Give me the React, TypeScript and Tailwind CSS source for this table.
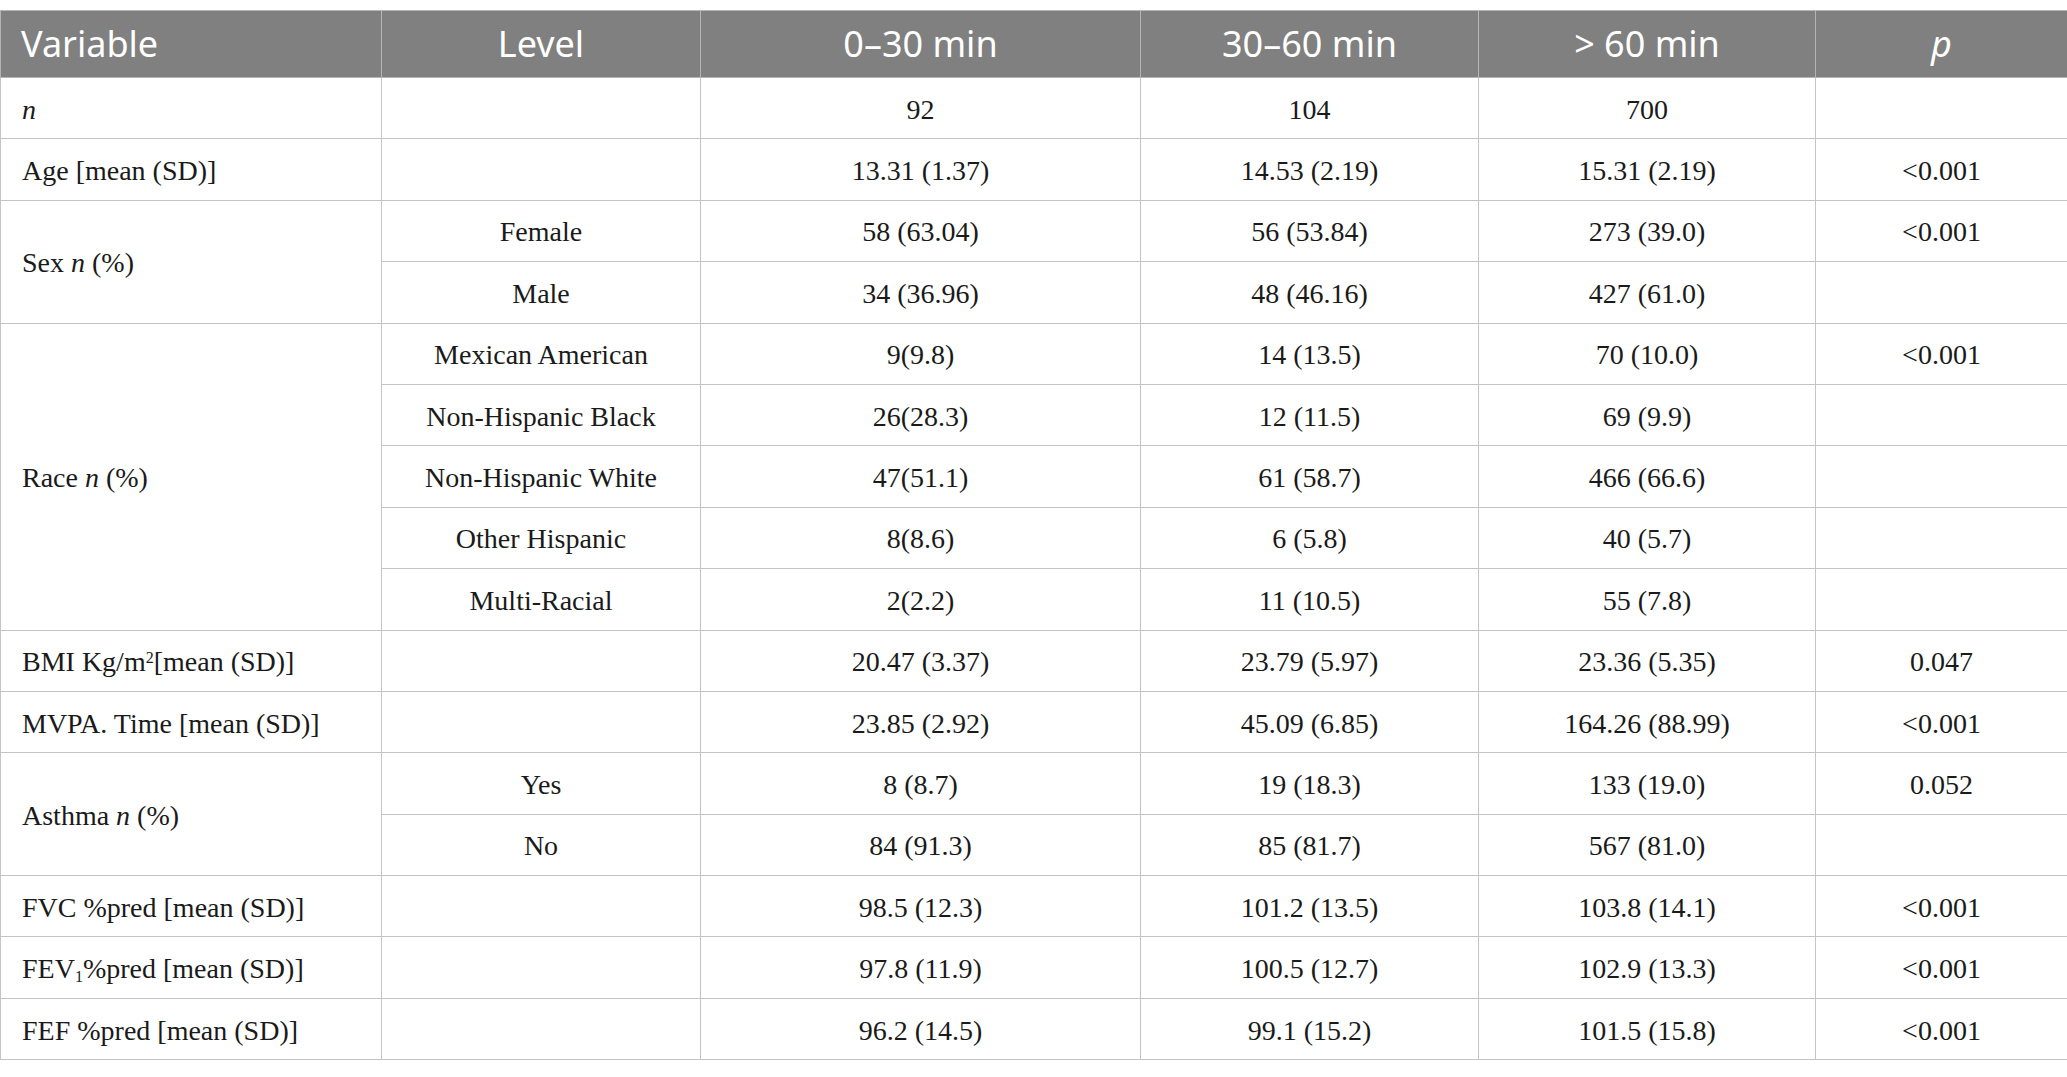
import React from "react";

const serif = { fontFamily: '"Liberation Serif", "Times New Roman", serif' };

type Row = {
  variable?: React.ReactNode;
  span?: number;
  level?: string;
  a: string;
  b: string;
  c: string;
  p: string;
};

const I = ({ children }: { children: React.ReactNode }) => <i>{children}</i>;

const rows: Row[] = [
  { variable: <I>n</I>, a: "92", b: "104", c: "700", p: "" },
  { variable: "Age [mean (SD)]", a: "13.31 (1.37)", b: "14.53 (2.19)", c: "15.31 (2.19)", p: "<0.001" },
  { variable: <>Sex <I>n</I> (%)</>, span: 2, level: "Female", a: "58 (63.04)", b: "56 (53.84)", c: "273 (39.0)", p: "<0.001" },
  { level: "Male", a: "34 (36.96)", b: "48 (46.16)", c: "427 (61.0)", p: "" },
  { variable: <>Race <I>n</I> (%)</>, span: 5, level: "Mexican American", a: "9(9.8)", b: "14 (13.5)", c: "70 (10.0)", p: "<0.001" },
  { level: "Non-Hispanic Black", a: "26(28.3)", b: "12 (11.5)", c: "69 (9.9)", p: "" },
  { level: "Non-Hispanic White", a: "47(51.1)", b: "61 (58.7)", c: "466 (66.6)", p: "" },
  { level: "Other Hispanic", a: "8(8.6)", b: "6 (5.8)", c: "40 (5.7)", p: "" },
  { level: "Multi-Racial", a: "2(2.2)", b: "11 (10.5)", c: "55 (7.8)", p: "" },
  {
    variable: (
      <>
        BMI Kg/m<sup className="text-[16px]">2</sup>[mean (SD)]
      </>
    ),
    a: "20.47 (3.37)",
    b: "23.79 (5.97)",
    c: "23.36 (5.35)",
    p: "0.047",
  },
  { variable: "MVPA. Time [mean (SD)]", a: "23.85 (2.92)", b: "45.09 (6.85)", c: "164.26 (88.99)", p: "<0.001" },
  { variable: <>Asthma <I>n</I> (%)</>, span: 2, level: "Yes", a: "8 (8.7)", b: "19 (18.3)", c: "133 (19.0)", p: "0.052" },
  { level: "No", a: "84 (91.3)", b: "85 (81.7)", c: "567 (81.0)", p: "" },
  { variable: "FVC %pred [mean (SD)]", a: "98.5 (12.3)", b: "101.2 (13.5)", c: "103.8 (14.1)", p: "<0.001" },
  {
    variable: (
      <>
        FEV<sub className="text-[16px]">1</sub>%pred [mean (SD)]
      </>
    ),
    a: "97.8 (11.9)",
    b: "100.5 (12.7)",
    c: "102.9 (13.3)",
    p: "<0.001",
  },
  { variable: "FEF %pred [mean (SD)]", a: "96.2 (14.5)", b: "99.1 (15.2)", c: "101.5 (15.8)", p: "<0.001" },
];

export default function App() {
  return (
    <div className="w-[2067px] h-[1077px] bg-white overflow-hidden pt-[10px]">
      <table className="w-[2067px] border-collapse table-fixed">
        <colgroup>
          <col className="w-[381px]" />
          <col className="w-[319px]" />
          <col className="w-[440px]" />
          <col className="w-[338px]" />
          <col className="w-[337px]" />
          <col className="w-[252px]" />
        </colgroup>
        <thead>
          <tr
            className="h-[67px] bg-[#808080] text-white text-[36px]"
            style={{ fontFamily: '"Noto Sans", "Open Sans", sans-serif' }}
          >
            <th className="border border-[#b5b5b5] text-left pl-[20px] font-normal">Variable</th>
            <th className="border border-[#b5b5b5] font-normal">Level</th>
            <th className="border border-[#b5b5b5] font-normal">0–30 min</th>
            <th className="border border-[#b5b5b5] font-normal">30–60 min</th>
            <th className="border border-[#b5b5b5] font-normal">&gt; 60 min</th>
            <th className="border border-[#b5b5b5] font-normal italic">p</th>
          </tr>
        </thead>
        <tbody className="text-[28px] text-[#1a1a1a]" style={serif}>
          {rows.map((r, i) => (
            <tr key={i} className="h-[61.4px]">
              {r.variable !== undefined && (
                <td rowSpan={r.span ?? 1} className="border border-[#c4c4c4] text-left pl-[21px] pt-[3px] align-middle">
                  {r.variable}
                </td>
              )}
              {r.variable !== undefined && r.level === undefined && (
                <td className="border border-[#c4c4c4] text-center"></td>
              )}
              {r.level !== undefined && <td className="border border-[#c4c4c4] text-center pt-[3px]">{r.level}</td>}
              <td className="border border-[#c4c4c4] text-center pt-[3px]">{r.a}</td>
              <td className="border border-[#c4c4c4] text-center pt-[3px]">{r.b}</td>
              <td className="border border-[#c4c4c4] text-center pt-[3px]">{r.c}</td>
              <td className="border border-[#c4c4c4] text-center pt-[3px]">{r.p}</td>
            </tr>
          ))}
        </tbody>
      </table>
    </div>
  );
}
